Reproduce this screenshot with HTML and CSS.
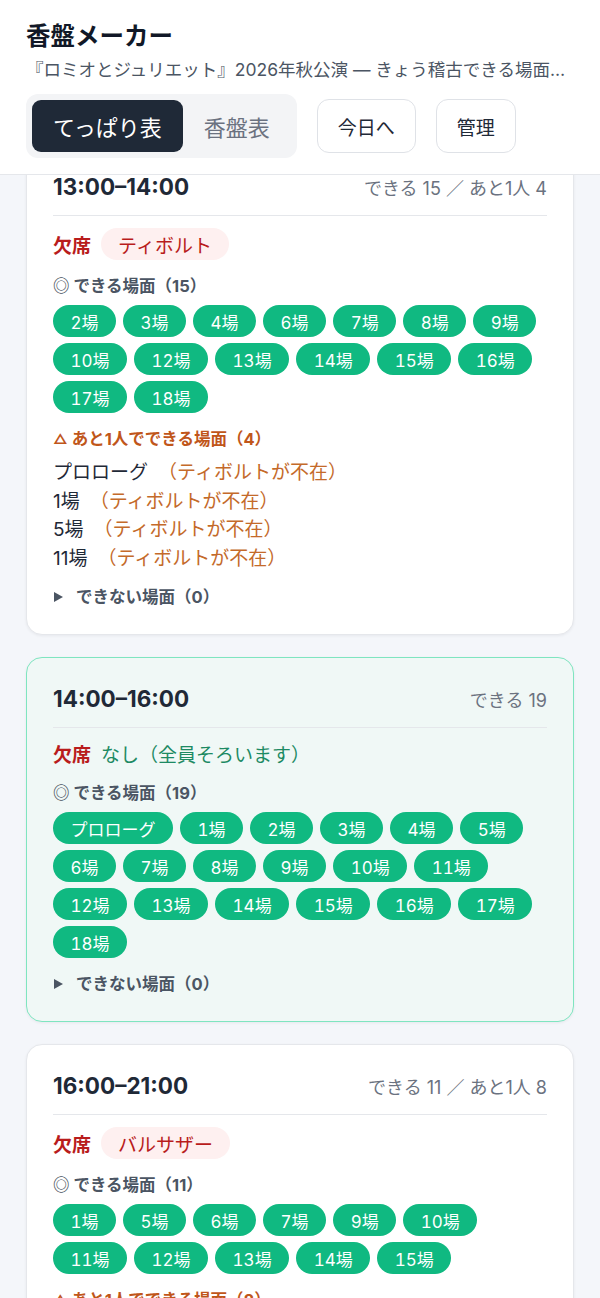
FILE: index.html
```html
<!DOCTYPE html>
<html lang="ja">
<head>
<meta charset="utf-8">
<title>香盤メーカー</title>
<link rel="stylesheet" href="styles.css">
</head>
<body>
<header class="header">
  <h1 class="title">香盤メーカー</h1>
  <p class="subtitle">『ロミオとジュリエット』2026年秋公演 — きょう稽古できる場面をひと目で確認できます</p>
  <div class="toolbar">
    <div class="seg">
      <button class="seg-btn is-active">てっぱり表</button>
      <button class="seg-btn">香盤表</button>
    </div>
    <button class="btn">今日へ</button>
    <button class="btn">管理</button>
  </div>
</header>

<main class="board">
  <div class="cards">
    <section class="card">
      <div class="card-head">
        <span class="time">13:00–14:00</span>
        <span class="summary">できる 15 ／ あと1人 4</span>
      </div>
      <div class="absent">
        <span class="absent-label">欠席</span>
        <span class="absent-pill">ティボルト</span>
      </div>
      <div class="section">
        <div class="sec-label ok">◎ できる場面（15）</div>
        <div class="chips">
          <span class="chip">2場</span><span class="chip">3場</span><span class="chip">4場</span><span class="chip">6場</span><span class="chip">7場</span><span class="chip">8場</span><span class="chip">9場</span><span class="chip">10場</span><span class="chip">12場</span><span class="chip">13場</span><span class="chip">14場</span><span class="chip">15場</span><span class="chip">16場</span><span class="chip">17場</span><span class="chip">18場</span>
        </div>
      </div>
      <div class="section">
        <div class="sec-label near"><span class="tri">△</span> あと1人でできる場面（4）</div>
        <ul class="near-list">
          <li><span class="scene">プロローグ</span><span class="reason">（ティボルトが不在）</span></li>
          <li><span class="scene">1場</span><span class="reason">（ティボルトが不在）</span></li>
          <li><span class="scene">5場</span><span class="reason">（ティボルトが不在）</span></li>
          <li><span class="scene">11場</span><span class="reason">（ティボルトが不在）</span></li>
        </ul>
      </div>
      <div class="section">
        <div class="sec-label ng"><span class="caret"></span>できない場面（0）</div>
      </div>
    </section>

    <section class="card is-full">
      <div class="card-head">
        <span class="time">14:00–16:00</span>
        <span class="summary">できる 19</span>
      </div>
      <div class="absent">
        <span class="absent-label">欠席</span>
        <span class="absent-none">なし（全員そろいます）</span>
      </div>
      <div class="section">
        <div class="sec-label ok">◎ できる場面（19）</div>
        <div class="chips">
          <span class="chip">プロローグ</span><span class="chip">1場</span><span class="chip">2場</span><span class="chip">3場</span><span class="chip">4場</span><span class="chip">5場</span><span class="chip">6場</span><span class="chip">7場</span><span class="chip">8場</span><span class="chip">9場</span><span class="chip">10場</span><span class="chip">11場</span><span class="chip">12場</span><span class="chip">13場</span><span class="chip">14場</span><span class="chip">15場</span><span class="chip">16場</span><span class="chip">17場</span><span class="chip">18場</span>
        </div>
      </div>
      <div class="section">
        <div class="sec-label ng"><span class="caret"></span>できない場面（0）</div>
      </div>
    </section>

    <section class="card">
      <div class="card-head">
        <span class="time">16:00–21:00</span>
        <span class="summary">できる 11 ／ あと1人 8</span>
      </div>
      <div class="absent">
        <span class="absent-label">欠席</span>
        <span class="absent-pill">バルサザー</span>
      </div>
      <div class="section">
        <div class="sec-label ok">◎ できる場面（11）</div>
        <div class="chips">
          <span class="chip">1場</span><span class="chip">5場</span><span class="chip">6場</span><span class="chip">7場</span><span class="chip">9場</span><span class="chip">10場</span><span class="chip">11場</span><span class="chip">12場</span><span class="chip">13場</span><span class="chip">14場</span><span class="chip">15場</span>
        </div>
      </div>
      <div class="section">
        <div class="sec-label near"><span class="tri">△</span> あと1人でできる場面（8）</div>
        <ul class="near-list">
          <li><span class="scene">プロローグ</span><span class="reason">（バルサザーが不在）</span></li>
          <li><span class="scene">2場</span><span class="reason">（バルサザーが不在）</span></li>
          <li><span class="scene">3場</span><span class="reason">（バルサザーが不在）</span></li>
          <li><span class="scene">4場</span><span class="reason">（バルサザーが不在）</span></li>
        </ul>
      </div>
    </section>
  </div>
</main>
</body>
</html>
```

FILE: styles.css
```css
* { box-sizing: border-box; }

html, body {
  margin: 0;
  padding: 0;
}

body {
  background: #f4f6fa;
  color: #1f2937;
  font-family: Inter, "Noto Sans CJK JP", "Noto Sans", sans-serif;
  height: 1298px;
  overflow: hidden;
}

/* ---------- header ---------- */
.header {
  background: #ffffff;
  padding: 20px 26px 16px;
  border-bottom: 1px solid #e5e7eb;
  position: relative;
  z-index: 1;
}

.title {
  margin: 0;
  font-size: 24.5px;
  line-height: 32px;
  font-weight: 700;
  color: #111827;
}

.subtitle {
  margin: 6px 0 0;
  font-size: 17.5px;
  line-height: 24px;
  color: #4b5563;
  white-space: nowrap;
  overflow: hidden;
  text-overflow: ellipsis;
}

.toolbar {
  margin-top: 12px;
  display: flex;
  align-items: center;
  gap: 20px;
}

.seg {
  display: flex;
  background: #f3f4f6;
  border-radius: 12px;
  padding: 6px;
}

.seg-btn {
  height: 52px;
  padding: 0 21px;
  border: 0;
  border-radius: 9px;
  background: transparent;
  font-family: inherit;
  font-size: 22px;
  color: #6b7280;
}

.seg-btn.is-active {
  background: #1f2937;
  color: #ffffff;
}

.btn {
  height: 54px;
  padding: 0 20px;
  background: #ffffff;
  border: 1px solid #dfe2e7;
  border-radius: 12px;
  font-family: inherit;
  font-size: 19px;
  color: #1f2937;
}

/* ---------- board ---------- */
.board {
  height: 1123px;
  overflow: hidden;
  padding: 0 26px;
}

.cards {
  display: flex;
  flex-direction: column;
  gap: 22px;
  margin-top: -30px;
}

.card {
  background: #ffffff;
  border: 1px solid #e5e7eb;
  border-radius: 16px;
  padding: 26px 26px 25px;
  box-shadow: 0 1px 3px rgba(15, 23, 42, 0.06);
}

.card.is-full {
  background: #f0f8f6;
  border: 1.5px solid #7fe5c0;
}

.card-head {
  display: flex;
  justify-content: space-between;
  align-items: baseline;
  padding-bottom: 11px;
  border-bottom: 1.5px solid #e5e7eb;
  line-height: 30px;
}

.time {
  font-size: 22.5px;
  font-weight: 700;
  color: #1f2937;
}

.summary {
  font-size: 18px;
  color: #6b7280;
}

.absent {
  margin: 12px 0 1px;
  display: flex;
  align-items: center;
  gap: 10px;
}

.absent-label {
  font-size: 19px;
  font-weight: 700;
  color: #b91c1c;
}

.absent-pill {
  display: inline-flex;
  align-items: center;
  height: 32px;
  padding: 0 17px;
  border-radius: 16px;
  background: #fef0f0;
  color: #b91c1c;
  font-size: 19px;
}

.absent-none {
  font-size: 19px;
  color: #1d8a63;
}

.section {
  margin-top: 14px;
}

.sec-label {
  font-size: 16.5px;
  line-height: 24px;
  font-weight: 700;
  color: #4b5563;
  display: flex;
  align-items: center;
}

.sec-label.near {
  color: #c0561a;
}

.tri {
  font-size: 14px;
  margin-right: 4px;
}

.caret {
  width: 0;
  height: 0;
  border-left: 9px solid #4b5563;
  border-top: 5px solid transparent;
  border-bottom: 5px solid transparent;
  margin: 0 13px 0 1px;
}

.chips {
  margin-top: 7px;
  display: flex;
  flex-wrap: wrap;
  gap: 6px 7px;
}

.chip {
  display: inline-flex;
  align-items: center;
  height: 32px;
  padding: 0 17.5px;
  border-radius: 16px;
  background: #10b981;
  color: #ffffff;
  font-size: 17px;
  font-variant-numeric: tabular-nums;
}

.near-list {
  list-style: none;
  margin: 8px 0 -2px;
  padding: 0;
}

.near-list li {
  font-size: 19px;
  line-height: 28.5px;
}

.scene {
  color: #1f2937;
}

.reason {
  margin-left: 10px;
  color: #c46a2a;
}
```
